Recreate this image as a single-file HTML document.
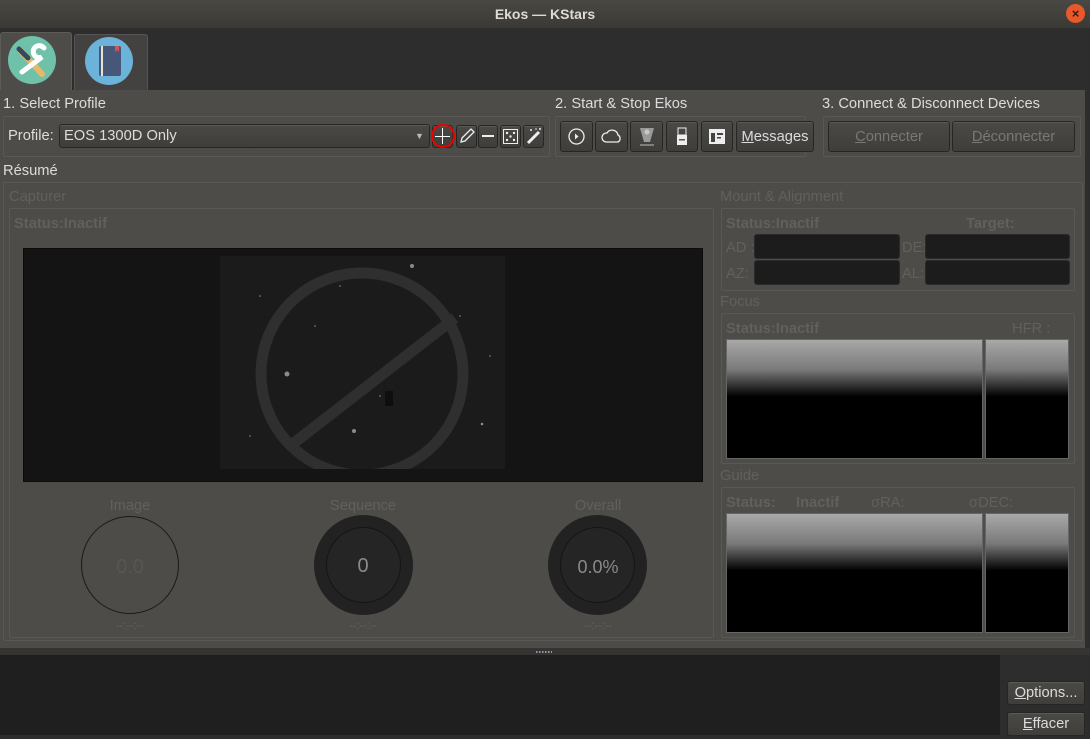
<!DOCTYPE html>
<html><head><meta charset="utf-8"><style>
*{box-sizing:border-box;margin:0;padding:0}
body{width:1090px;height:739px;overflow:hidden;background:#2d2d2d;font-family:"Liberation Sans","DejaVu Sans",sans-serif;font-size:14.7px;color:#dcdcdc;position:relative}
.a{position:absolute}
.t{position:absolute;white-space:nowrap;line-height:16px}
.dis{color:#62605c}
.box{position:absolute;border:1px solid #5a5854;border-radius:2px}
.btn{position:absolute;background:linear-gradient(#4a4946,#3f3e3b);border:1px solid #262625;border-radius:3px;box-shadow:inset 0 1px 0 #5a5955}
.fld{position:absolute;background:#1c1c1c;border:1px solid #2a2a2a;border-radius:3px}
.gr{position:absolute;background:linear-gradient(#a8a8a8 0%,#7a7a7a 25%,#000 48%,#000 100%);border:1px solid #666}
</style></head><body>
<div class="a" style="left:0;top:0;width:1090px;height:28px;background:linear-gradient(#4a4843,#3a3935)"></div>
<div class="t" style="left:0;width:1090px;top:6px;text-align:center;font-weight:bold;color:#dfdbd2;font-size:14px">Ekos — KStars</div>
<div class="a" style="left:1066px;top:4px;width:19px;height:19px;border-radius:50%;background:#e8582a;color:#3a1a10;font-size:13px;line-height:19px;text-align:center;font-weight:bold">×</div>
<div class="a" style="left:0;top:28px;width:1090px;height:62px;background:#2d2d2d"></div>
<div class="a" style="left:0;top:32px;width:72px;height:60px;background:#4e4c49;border:1px solid #5e5c58;border-bottom:none;border-radius:3px 3px 0 0"></div>
<div class="a" style="left:74px;top:34px;width:74px;height:56px;background:#434240;border:1px solid #555;border-bottom:none;border-radius:3px 3px 0 0"></div>
<svg class="a" style="left:8px;top:36px" width="48" height="48" viewBox="0 0 48 48"><circle cx="24" cy="24" r="24" fill="#6fc2a9"/><path d="M12 14 L34 38" stroke="#e8b86a" stroke-width="6" stroke-linecap="round"/><path d="M11 13 L20 22" stroke="#34495e" stroke-width="5" stroke-linecap="round"/><path d="M36 12 a6 6 0 1 0 -2 9 L14 36" stroke="#fff" stroke-width="5" fill="none" stroke-linecap="round"/></svg>
<svg class="a" style="left:85px;top:37px" width="48" height="48" viewBox="0 0 48 48"><circle cx="24" cy="24" r="24" fill="#6bb3d8"/><rect x="14" y="9" width="22" height="30" rx="2" fill="#46577a"/><rect x="16" y="9" width="2" height="30" fill="#e8e2d0"/><path d="M30 9h4v6l-2-2-2 2z" fill="#d9534f"/></svg>
<div class="a" style="left:0;top:90px;width:1085px;height:558px;background:#4e4c49"></div>
<div class="t" style="left:3px;top:96px">1. Select Profile</div>
<div class="t" style="left:555px;top:96px">2. Start &amp; Stop Ekos</div>
<div class="t" style="left:822px;top:96px">3. Connect &amp; Disconnect Devices</div>
<div class="box" style="left:3px;top:116px;width:547px;height:41px"></div>
<div class="box" style="left:555px;top:116px;width:251px;height:41px"></div>
<div class="box" style="left:823px;top:116px;width:258px;height:41px"></div>
<div class="t" style="left:8px;top:128px">Profile:</div>
<div class="btn" style="left:59px;top:124px;width:371px;height:24px"></div>
<div class="t" style="left:64px;top:128px">EOS 1300D Only</div>
<div class="t" style="left:415px;top:128px;font-size:9px;color:#bbb">▼</div>
<div class="btn" style="left:432px;top:125px;width:21px;height:23px"></div>
<div class="a" style="left:431px;top:124px;width:24px;height:24px;border:2px solid #e00;border-radius:50%"></div>
<div class="a" style="left:442px;top:128px;width:1px;height:16px;background:#fff"></div>
<div class="a" style="left:435px;top:136px;width:15px;height:1px;background:#fff"></div>
<div class="btn" style="left:456px;top:125px;width:21px;height:23px"></div>
<svg class="a" style="left:458px;top:127px" width="18" height="18"><path d="M3 15 L4 11 L13 2 L16 5 L7 14 Z" stroke="#eee" fill="none" stroke-width="1.3"/></svg>
<div class="btn" style="left:478px;top:125px;width:20px;height:23px"></div>
<div class="a" style="left:482px;top:135px;width:12px;height:2px;background:#eee"></div>
<div class="btn" style="left:500px;top:125px;width:21px;height:23px"></div>
<svg class="a" style="left:502px;top:128px" width="17" height="17"><rect x="1.5" y="1.5" width="14" height="14" stroke="#eee" fill="none"/><circle cx="5" cy="5" r="1.2" fill="#eee"/><circle cx="12" cy="5" r="1.2" fill="#eee"/><circle cx="8.5" cy="8.5" r="1.2" fill="#eee"/><circle cx="5" cy="12" r="1.2" fill="#eee"/><circle cx="12" cy="12" r="1.2" fill="#eee"/></svg>
<div class="btn" style="left:523px;top:125px;width:21px;height:23px"></div>
<svg class="a" style="left:525px;top:127px" width="18" height="18"><path d="M3 16 L14 5" stroke="#eee" stroke-width="3"/><circle cx="6" cy="3" r="1" fill="#eee"/><circle cx="15" cy="2" r="1" fill="#eee"/><circle cx="11" cy="2" r="0.8" fill="#eee"/></svg>
<div class="btn" style="left:560px;top:121px;width:33px;height:31px"></div>
<svg class="a" style="left:567px;top:127px" width="19" height="19"><circle cx="9.5" cy="9.5" r="7.5" stroke="#eee" fill="none" stroke-width="1.3"/><path d="M8 6.5 L11.5 9.5 L8 12.5Z" fill="#eee"/></svg>
<div class="btn" style="left:595px;top:121px;width:33px;height:31px"></div>
<svg class="a" style="left:601px;top:127px" width="22" height="18"><path d="M5 15 H17 A4 4 0 0 0 17 8 A6 6 0 0 0 6 6 A4.5 4.5 0 0 0 5 15Z" stroke="#eee" fill="none" stroke-width="1.3"/></svg>
<div class="btn" style="left:630px;top:121px;width:33px;height:31px"></div>
<svg class="a" style="left:637px;top:126px" width="20" height="22"><path d="M3 2 H17 L13 16 H7Z" fill="#9a9a9a"/><circle cx="10" cy="6" r="2.5" fill="#c8c8c8"/><path d="M3 19 H17" stroke="#bbb"/></svg>
<div class="btn" style="left:666px;top:121px;width:32px;height:31px"></div>
<svg class="a" style="left:674px;top:127px" width="16" height="20"><rect x="4" y="1" width="8" height="7" stroke="#eee" fill="none"/><rect x="3" y="8" width="10" height="10" fill="#eee"/><rect x="5" y="12" width="6" height="1.5" fill="#555"/></svg>
<div class="btn" style="left:701px;top:121px;width:32px;height:31px"></div>
<svg class="a" style="left:708px;top:128px" width="18" height="17"><rect x="1" y="1" width="16" height="15" fill="#eee"/><rect x="3" y="5" width="4" height="9" fill="#444"/><rect x="9" y="5" width="6" height="2" fill="#444"/><rect x="9" y="9" width="4" height="1.5" fill="#444"/></svg>
<div class="btn" style="left:736px;top:121px;width:78px;height:31px"></div>
<div class="t" style="left:736px;width:78px;text-align:center;top:129px"><u>M</u>essages</div>
<div class="btn" style="left:828px;top:121px;width:122px;height:31px"></div>
<div class="t" style="left:828px;width:122px;text-align:center;top:129px;color:#7a7874"><u>C</u>onnecter</div>
<div class="btn" style="left:952px;top:121px;width:123px;height:31px"></div>
<div class="t" style="left:952px;width:123px;text-align:center;top:129px;color:#7a7874"><u>D</u>éconnecter</div>
<div class="t" style="left:3px;top:163px">Résumé</div>
<div class="box" style="left:3px;top:182px;width:1080px;height:459px"></div>
<div class="t dis" style="left:9px;top:189px">Capturer</div>
<div class="box" style="left:9px;top:208px;width:705px;height:430px"></div>
<div class="t dis" style="left:14px;top:216px;font-weight:bold">Status:Inactif</div>
<div class="a" style="left:23px;top:248px;width:680px;height:234px;background:#141414;border:1px solid #0c0c0c"></div>
<div class="a" style="left:220px;top:256px;width:285px;height:213px;background:#1b1b1b"></div>
<svg class="a" style="left:220px;top:256px" width="285" height="213"><g fill="#8a8a8a"><circle cx="67" cy="118" r="2.5"/><circle cx="192" cy="10" r="2"/><circle cx="134" cy="175" r="2"/><circle cx="262" cy="168" r="1.3"/><circle cx="95" cy="70" r="0.8"/><circle cx="40" cy="40" r="0.8"/><circle cx="240" cy="60" r="0.8"/><circle cx="160" cy="140" r="0.8"/><circle cx="30" cy="180" r="0.8"/><circle cx="270" cy="100" r="0.8"/><circle cx="200" cy="200" r="0.8"/><circle cx="120" cy="30" r="0.8"/></g><path d="M165 135 h8 v15 h-8z" fill="#0e0e0e"/><circle cx="142" cy="118" r="101" stroke="#2f2f2f" stroke-width="11" fill="none"/><path d="M70 190 L235 62" stroke="#2f2f2f" stroke-width="11"/></svg>
<div class="t dis" style="left:80px;width:100px;text-align:center;top:498px">Image</div>
<div class="t dis" style="left:313px;width:100px;text-align:center;top:498px">Sequence</div>
<div class="t dis" style="left:548px;width:100px;text-align:center;top:498px">Overall</div>
<div class="a" style="left:81px;top:516px;width:98px;height:98px;border-radius:50%;border:1px solid #1a1a1a"></div>
<div class="t" style="left:80px;width:100px;text-align:center;top:556px;font-size:20px;line-height:22px;color:#585654">0.0</div>
<div class="a" style="left:314px;top:515px;width:99px;height:100px;border-radius:50%;background:#222"></div>
<div class="a" style="left:326px;top:527px;width:75px;height:76px;border-radius:50%;background:#252525;border:1px solid #151515"></div>
<div class="t" style="left:313px;width:100px;text-align:center;top:555px;font-size:20px;line-height:22px;color:#8a8a8a">0</div>
<div class="a" style="left:548px;top:515px;width:99px;height:100px;border-radius:50%;background:#222"></div>
<div class="a" style="left:560px;top:527px;width:75px;height:76px;border-radius:50%;background:#252525;border:1px solid #151515"></div>
<div class="t" style="left:548px;width:100px;text-align:center;top:556px;font-size:18px;line-height:22px;color:#8a8a8a">0.0%</div>
<div class="t dis" style="left:80px;width:100px;text-align:center;top:618px;font-size:11px">--:--:--</div>
<div class="t dis" style="left:313px;width:100px;text-align:center;top:618px;font-size:11px">--:--:--</div>
<div class="t dis" style="left:548px;width:100px;text-align:center;top:618px;font-size:11px">--:--:--</div>
<div class="t dis" style="left:720px;top:189px">Mount &amp; Alignment</div>
<div class="box" style="left:721px;top:208px;width:354px;height:83px"></div>
<div class="t dis" style="left:726px;top:216px;font-weight:bold">Status:Inactif</div>
<div class="t dis" style="left:966px;top:216px;font-weight:bold">Target:</div>
<div class="t dis" style="left:726px;top:240px">AD :</div>
<div class="t dis" style="left:726px;top:266px">AZ:</div>
<div class="t dis" style="left:902px;top:240px">DE:</div>
<div class="t dis" style="left:902px;top:266px">AL:</div>
<div class="fld" style="left:754px;top:234px;width:146px;height:25px"></div>
<div class="fld" style="left:754px;top:260px;width:146px;height:25px"></div>
<div class="fld" style="left:925px;top:234px;width:145px;height:25px"></div>
<div class="fld" style="left:925px;top:260px;width:145px;height:25px"></div>
<div class="t dis" style="left:720px;top:294px">Focus</div>
<div class="box" style="left:721px;top:313px;width:354px;height:151px"></div>
<div class="t dis" style="left:726px;top:321px;font-weight:bold">Status:Inactif</div>
<div class="t dis" style="left:1012px;top:321px">HFR :</div>
<div class="gr" style="left:726px;top:339px;width:257px;height:120px"></div>
<div class="gr" style="left:985px;top:339px;width:84px;height:120px"></div>
<div class="t dis" style="left:720px;top:468px">Guide</div>
<div class="box" style="left:721px;top:487px;width:354px;height:151px"></div>
<div class="t dis" style="left:726px;top:495px;font-weight:bold">Status:</div>
<div class="t dis" style="left:796px;top:495px;font-weight:bold">Inactif</div>
<div class="t dis" style="left:871px;top:495px">σRA:</div>
<div class="t dis" style="left:969px;top:495px">σDEC:</div>
<div class="gr" style="left:726px;top:513px;width:257px;height:120px"></div>
<div class="gr" style="left:985px;top:513px;width:84px;height:120px"></div>
<div class="a" style="left:0;top:648px;width:1090px;height:7px;background:#353432"></div>
<div class="a" style="left:536px;top:651px;width:16px;height:2px;background-image:linear-gradient(90deg,#999 50%,transparent 50%);background-size:3px 2px"></div>
<div class="a" style="left:0;top:655px;width:1000px;height:80px;background:#1f1f1f"></div>
<div class="btn" style="left:1007px;top:681px;width:78px;height:24px"></div>
<div class="t" style="left:1007px;width:78px;text-align:center;top:685px"><u>O</u>ptions...</div>
<div class="btn" style="left:1007px;top:712px;width:78px;height:24px"></div>
<div class="t" style="left:1007px;width:78px;text-align:center;top:716px"><u>E</u>ffacer</div>
</body></html>
